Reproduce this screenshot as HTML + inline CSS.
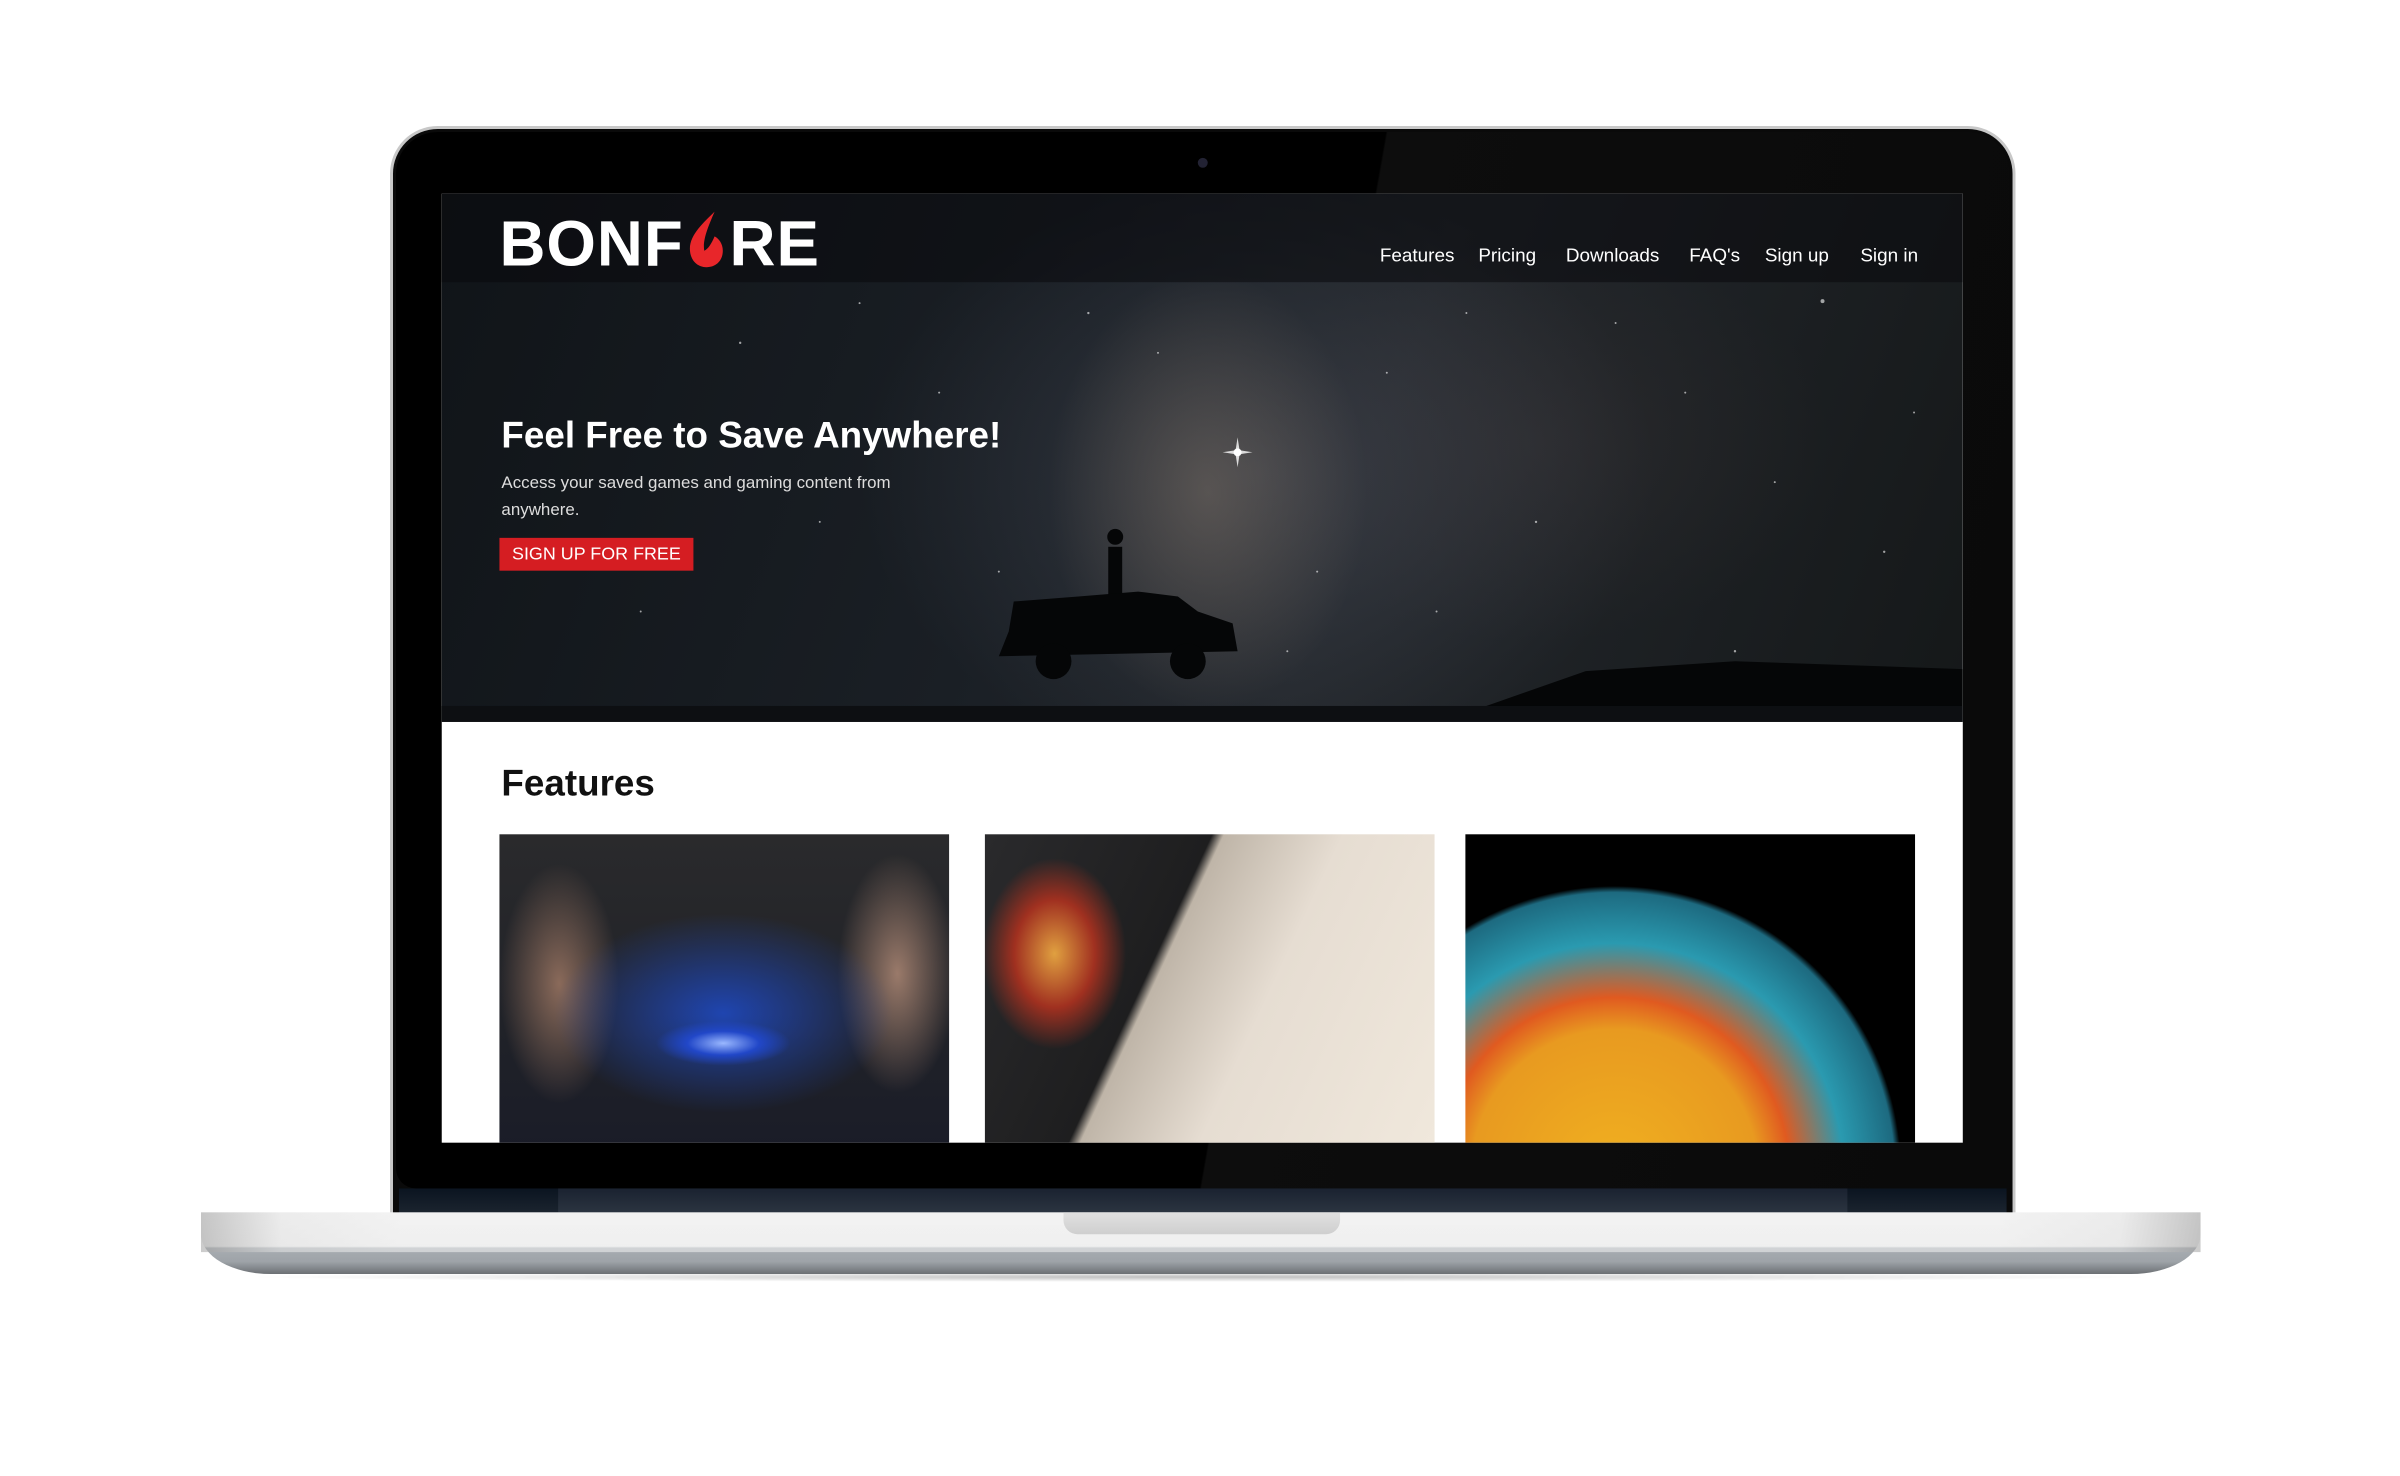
<!DOCTYPE html>
<html><head><meta charset="utf-8"><style>
*{margin:0;padding:0;box-sizing:border-box}
body{width:2400px;height:1476px;background:#fff;position:relative;overflow:hidden;font-family:"Liberation Sans",sans-serif}
#wrap{position:absolute;left:0;top:0;width:2400px;height:1476px;transform:scale(0.9948);transform-origin:201px 126px}
.abs{position:absolute}
#lid{left:391px;top:126px;width:1634px;height:1100px;border-radius:48px 48px 0 0;background:#0a0a0a;border:3px solid #c8c8c8;border-bottom:none}
#lidin{left:397px;top:132px;width:1622px;height:1062px;border-radius:42px 42px 20px 20px;background:linear-gradient(100deg,#000 0%,#000 55%,#0d0d0d 55.1%,#0a0a0a 100%)}
#hinge{left:400px;top:1194px;width:1616px;height:26px;background:linear-gradient(#0b1420,#1c2530)}
#hinge2{left:560px;top:1194px;width:1296px;height:24px;background:linear-gradient(#1a2230,#2b3440)}
#base{left:201px;top:1218px;width:2010px;height:62px;border-radius:0 0 70px 70px/0 0 40px 40px;background:linear-gradient(#f3f3f3 0%,#ececec 55%,#a8adb2 58%,#9ea3a8 80%,#6c7074 100%)}
#baseside{left:201px;top:1218px;width:2010px;height:40px;background:linear-gradient(90deg,#a0a0a0 0%,#e6e6e6 4%,#f2f2f2 10%,#f2f2f2 90%,#e6e6e6 96%,#a0a0a0 100%);opacity:.55}
#notch{left:1068px;top:1218px;width:278px;height:22px;border-radius:0 0 14px 14px;background:linear-gradient(#e0e0e0,#cfcfcf)}
#shadow{left:240px;top:1278px;width:1930px;height:10px;background:radial-gradient(ellipse at center,rgba(0,0,0,.25),rgba(0,0,0,0) 70%)}
#cam{left:1203px;top:158px;width:10px;height:10px;border-radius:50%;background:#223}
#screen{left:443px;top:194px;width:1529px;height:954px;background:#fff;overflow:hidden}
#hero{left:0;top:0;width:1529px;height:531px;background:
radial-gradient(ellipse 160px 220px at 770px 300px,rgba(160,140,120,.35),transparent),
radial-gradient(ellipse 400px 300px at 820px 280px,rgba(90,95,110,.35),transparent),
radial-gradient(ellipse 300px 200px at 1100px 250px,rgba(70,60,60,.25),transparent),
linear-gradient(110deg,#101418 0%,#1a1f25 40%,#23272c 60%,#151819 100%)}
#nav{left:0;top:0;width:1529px;height:89px;background:rgba(10,10,12,.55)}
.logo{left:58px;top:14px;font-size:64px;font-weight:bold;color:#fff;letter-spacing:1px;line-height:72px;white-space:nowrap}
.menu{top:52px;font-size:19px;color:#fff}
h1{position:absolute;left:60px;top:222px;font-size:37px;color:#fff;font-weight:bold}
.sub{left:60px;top:277px;font-size:17px;line-height:27px;color:#ddd;width:400px}
.btn{left:58px;top:346px;width:195px;height:33px;background:#d51d22;color:#fff;font-size:18px;line-height:33px;text-align:center}
#ground{left:0;top:515px;width:1529px;height:16px;background:#0d0f12}
h2{position:absolute;left:60px;top:572px;font-size:37px;font-weight:bold;color:#111}
.card{top:644px;height:320px;width:452px}
</style></head><body>
<div id="wrap">
<div id="shadow" class="abs"></div>
<div id="lid" class="abs"></div>
<div id="lidin" class="abs"></div>
<div id="cam" class="abs"></div>
<div id="hinge" class="abs"></div>
<div id="hinge2" class="abs"></div>
<div id="base" class="abs"></div>
<div id="baseside" class="abs"></div>
<div id="notch" class="abs"></div>
<div id="screen" class="abs">
 <div id="hero" class="abs">
  <svg class="abs" style="left:0;top:0" width="1529" height="531">
   <g fill="#fff" opacity=".6">
    <circle cx="1388" cy="108" r="2"/><circle cx="300" cy="150" r="1.2"/><circle cx="500" cy="200" r="1"/><circle cx="650" cy="120" r="1.2"/><circle cx="950" cy="180" r="1"/><circle cx="1100" cy="330" r="1.2"/><circle cx="1250" cy="200" r="1"/><circle cx="1450" cy="360" r="1.2"/><circle cx="200" cy="420" r="1"/><circle cx="1000" cy="420" r="1"/><circle cx="1300" cy="460" r="1.2"/>
    <circle cx="120" cy="250" r="1"/><circle cx="380" cy="330" r="1"/><circle cx="560" cy="380" r="1"/><circle cx="720" cy="160" r="1"/><circle cx="880" cy="380" r="1"/><circle cx="1180" cy="130" r="1"/><circle cx="1340" cy="290" r="1"/><circle cx="1480" cy="220" r="1"/><circle cx="1030" cy="120" r="1"/><circle cx="420" cy="110" r="1"/><circle cx="850" cy="460" r="1"/>
   </g>
   <circle cx="800" cy="260" r="4" fill="#fff"/>
   <path d="M800 245 L802 258 L815 260 L802 262 L800 275 L798 262 L785 260 L798 258Z" fill="#fff" opacity=".8"/>
   <g fill="#050607">
    <rect x="670" y="355" width="14" height="50"/><circle cx="677" cy="345" r="8"/>
    <path d="M570 440 L575 410 L640 405 L700 400 L740 405 L760 420 L795 432 L800 460 L560 465 Z"/>
    <circle cx="615" cy="470" r="18"/><circle cx="750" cy="470" r="18"/>
    <path d="M1050 515 L1150 480 L1300 470 L1529 478 L1529 515Z"/>
   </g>
  </svg>
  <div id="ground" class="abs"></div>
  <div id="nav" class="abs"></div>
  <div class="abs logo">BONF<svg width="46" height="60" viewBox="0 0 44 58" style="vertical-align:-4px"><path d="M30 2 C20 12 6 24 6 38 C6 49 13 56 22 56 C32 56 38 49 38 40 C38 33 34 28 30 26 C27 33 24 38 20 40 C18 30 24 16 30 2Z" fill="#e8262a"/></svg>RE</div>
  <div class="abs menu" style="left:943px">Features</div>
  <div class="abs menu" style="left:1042px">Pricing</div>
  <div class="abs menu" style="left:1130px">Downloads</div>
  <div class="abs menu" style="left:1254px">FAQ's</div>
  <div class="abs menu" style="left:1330px">Sign up</div>
  <div class="abs menu" style="left:1426px">Sign in</div>
  <h1>Feel Free to Save Anywhere!</h1>
  <div class="abs sub">Access your saved games and gaming content from anywhere.</div>
  <div class="abs btn">SIGN UP FOR FREE</div>
 </div>
 <h2>Features</h2>
 <div class="abs card" style="left:58px;background:radial-gradient(ellipse 90px 30px at 225px 210px,#9ab8ff,#2147c8 40%,transparent 75%),radial-gradient(ellipse 170px 100px at 225px 180px,#1f45b0,transparent),radial-gradient(ellipse 60px 120px at 60px 150px,#8a6a5a,transparent),radial-gradient(ellipse 60px 120px at 400px 140px,#9a7a6a,transparent),linear-gradient(#2a2a2c,#202228 60%,#1a1c28)"></div>
 <div class="abs card" style="left:546px;background:radial-gradient(ellipse 90px 120px at 70px 120px,#e0a040,#a03020 45%,transparent 80%),linear-gradient(115deg,#2a2a2c 0%,#1e1e1f 38%,#bfb5a8 40%,#e6ddd2 60%,#f0e8dc 100%)"></div>
 <div class="abs card" style="left:1029px;background:radial-gradient(circle 320px at 150px 340px,#f0b020 0%,#e89a20 45%,#e05a20 55%,#2a9ab0 72%,#1d6a80 88%,#000 90%)"></div>
</div>
</div>
</body></html>
